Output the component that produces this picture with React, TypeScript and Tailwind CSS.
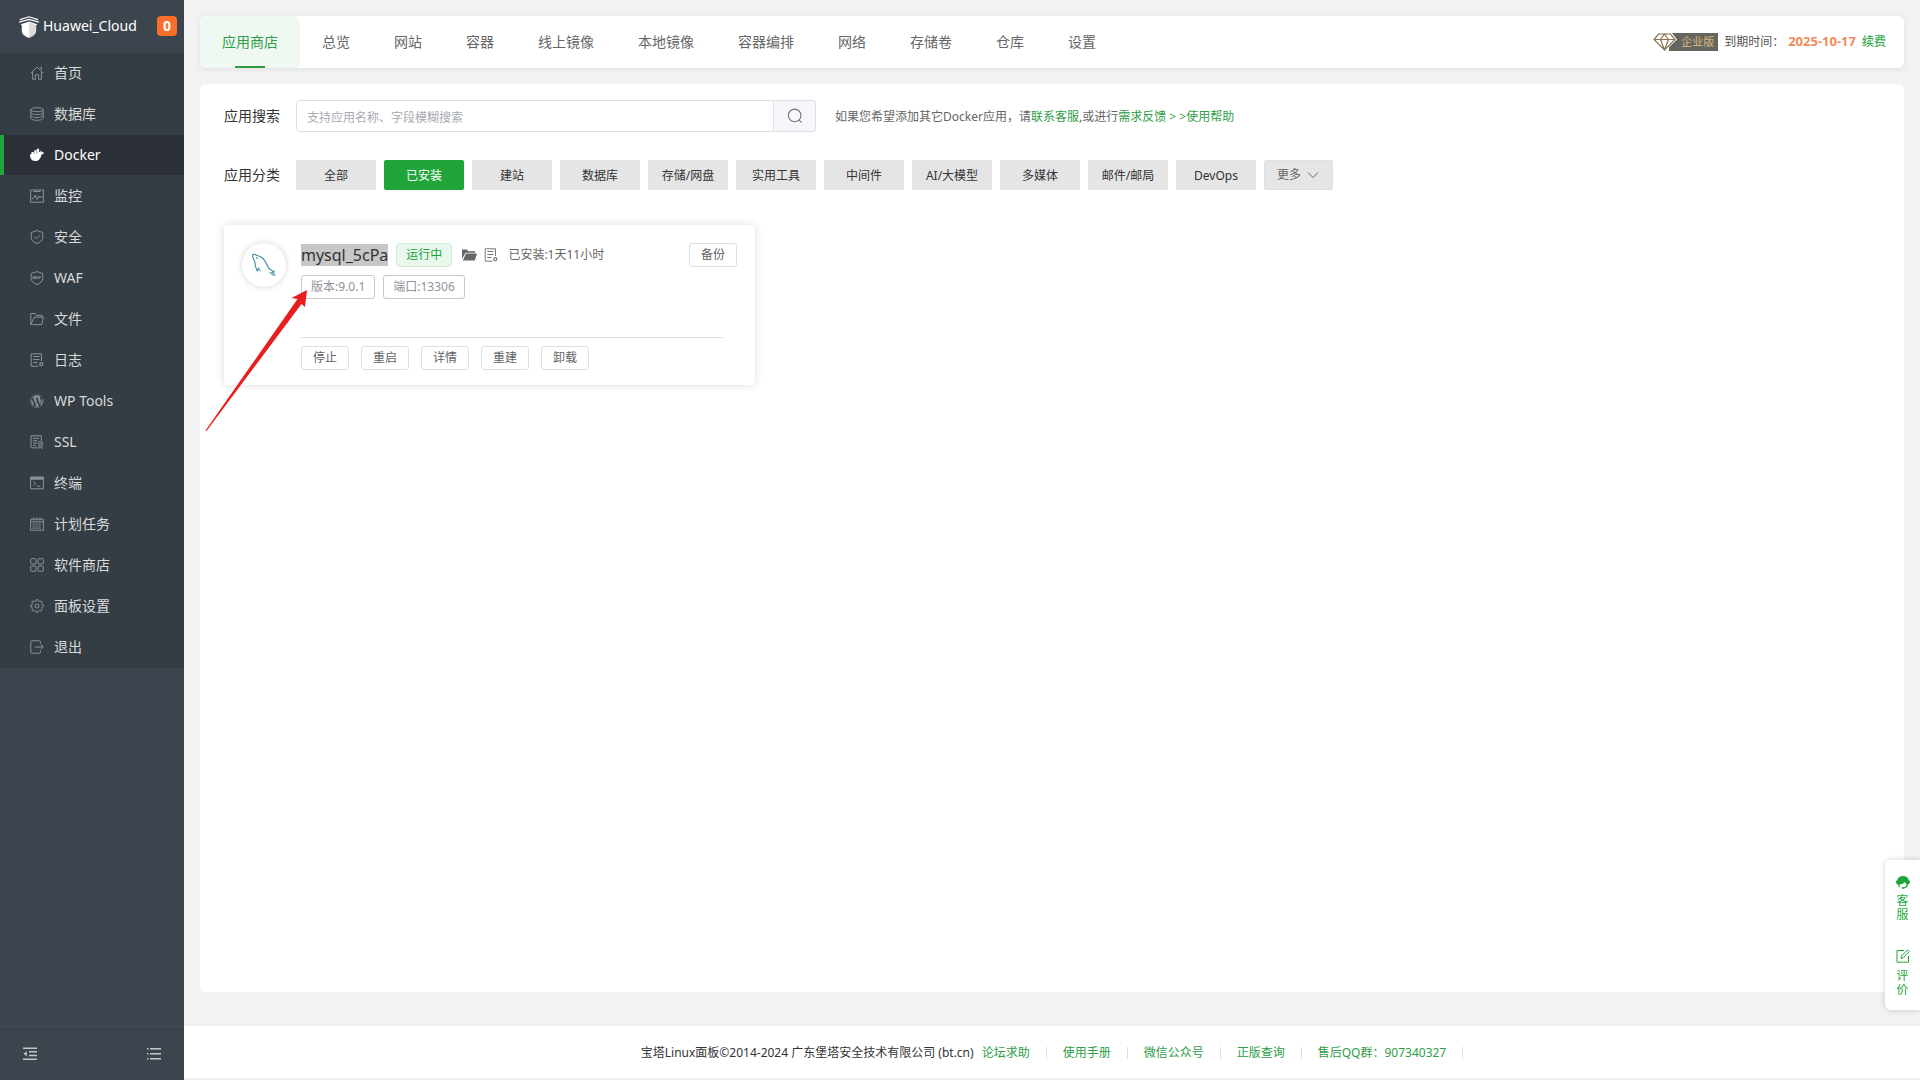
import React from "react";
import { FaWordpress } from "react-icons/fa";

type IconProps = { children: React.ReactNode; className?: string };

function Icon({ children, className = "size-3.5" }: IconProps) {
  return (
    <svg viewBox="0 0 14 14" className={className} fill="none" stroke="currentColor" strokeWidth="1" aria-hidden="true">
      {children}
    </svg>
  );
}

function LogIcon({ className }: { className?: string }) {
  return (
    <Icon className={className}>
      <path d="M11.5 8V.8H1.2v12.4H8.500M3.300 3.500h6.200M3.300 6.500h6.200M3.300 9.500h4" />
      <circle cx="11.3" cy="11.2" r="1.5" strokeWidth="1.300" />
    </Icon>
  );
}

const menu: { label: string; icon: React.ReactNode }[] = [
  { label: "首页", icon: <Icon><path d="M.7 7.2 7 .9l6.3 6.3M2.6 6v7.3h2.8V8.8h3.2v4.5h2.8V6M9.6 1.3h1.8v2.6" /></Icon> },
  { label: "数据库", icon: <Icon><ellipse cx="7" cy="2.7" rx="6.2" ry="2" /><path d="M.8 2.7v8.6c0 1.1 2.8 2 6.2 2s6.2-.9 6.2-2V2.7M.8 5.6c0 1.1 2.8 2 6.2 2s6.2-.9 6.2-2M.8 8.5c0 1.1 2.8 2 6.2 2s6.2-.9 6.2-2" /></Icon> },
  { label: "Docker", icon: <Icon><path fill="currentColor" stroke="none" d="M0 6.300h1.400V4h2.800V2.300h2.600V.8h2.300V4h1.300c0-.7.100-1 .5-1.400.6.5.9 1 .9 1.700.6-.1 1.500 0 2.200.5-.4 1-1.300 1.500-2.500 1.600C10.600 11 8.500 13 5 13 1.600 13 0 10.300 0 6.300Z" /><path d="M4.200 4v1.800M6.800 2.500v3.300" stroke="#2c3138" strokeWidth=".5" /></Icon> },
  { label: "监控", icon: <Icon><path d="M.6 1h12.800v12.200H.6zM3.500 2.500h7M1.500 9.700h2L5.200 6l2 4.500L8.800 7l1.400 2 1-1.500h1.500" /></Icon> },
  { label: "安全", icon: <Icon><path d="M7 .6 12.800 2.500v5c0 2.800-2.500 4.700-5.800 6-3.300-1.300-5.800-3.200-5.800-6v-5zM4.300 6.700l2.100 2.100L10 5.200" /></Icon> },
  { label: "WAF", icon: <Icon><path d="M7 .6 12.800 2.500v5c0 2.800-2.500 4.700-5.800 6-3.300-1.300-5.800-3.200-5.800-6v-5z" /><path strokeWidth=".8" d="m2.600 5.300.8 2.600.8-2.400.8 2.400.7-2.600M6 8l1-2.600L8 8M6.500 7.200h1M9 8V5.500h2M9 6.700h1.600" /></Icon> },
  { label: "文件", icon: <Icon><path d="M.8 12.600V1.500h4.400l1.300 1.900h5.600v1.800M.8 12.600h11l1.500-7.400H4.200v0L.8 12.600" /></Icon> },
  { label: "日志", icon: <LogIcon /> },
  { label: "WP Tools", icon: <FaWordpress className="size-3.5" aria-hidden="true" /> },
  { label: "SSL", icon: <Icon><path d="M11.300 5.500V.8H1v12h6.500M3 3.300h6.300M3 5.700h4.500M3 8h4M3 10.300h3" /><circle cx="10.500" cy="8.500" r="2.200" /><circle cx="10.500" cy="8.500" r=".6" /><path d="m9.300 10.400-.6 3 1.800-1 1.800 1-.6-3" /></Icon> },
  { label: "终端", icon: <Icon><path d="M.6 1.200h12.800v11.600H.6z" /><path fill="currentColor" d="M.6 1.200h12.800v2H.6z" /><path d="m3.500 5.600 2.200 1.800-2.200 1.900M7 10.200h3.500" /></Icon> },
  { label: "计划任务", icon: <Icon><path d="M.6 2.200h12.800v11H.6zM.6 4.800h12.800M4 .4v3M7 .4v3M10 .4v3" /><path strokeWidth="1.200" strokeDasharray="2 1" d="M2.600 7h9M2.600 9h9M2.600 11.100h9" /></Icon> },
  { label: "软件商店", icon: <Icon><rect x=".7" y=".7" width="5.300" height="5.300" rx=".8" /><rect x="8" y=".7" width="5.300" height="5.300" rx=".8" /><rect x=".7" y="8" width="5.300" height="5.300" rx=".8" /><rect x="8" y="8" width="5.300" height="5.300" rx=".8" /></Icon> },
  { label: "面板设置", icon: <Icon><path d="m5.700 2 .4-1.300h1.800L8.300 2l1.400.5 1.200-.7 1.300 1.300-.7 1.200.5 1.400 1.300.4v1.800l-1.300.4-.5 1.400.7 1.200-1.300 1.300-1.200-.7-1.400.5-.4 1.300H6.100L5.700 12l-1.400-.5-1.200.7-1.300-1.300.7-1.200L2 8.300.7 7.900V6.100L2 5.700l.5-1.400-.7-1.200 1.300-1.300 1.200.7z" /><circle cx="7" cy="7" r="2" /></Icon> },
  { label: "退出", icon: <Icon><path d="M10.500 3.500V2c0-.7-.4-1.200-1.200-1.200H2C1.300.8.8 1.300.8 2v10c0 .8.500 1.200 1.200 1.200h7.300c.8 0 1.200-.4 1.200-1.200v-1.500M5 7h8M10.800 4.700 13.200 7l-2.400 2.300" /></Icon> },
];

const tabs = ["应用商店", "总览", "网站", "容器", "线上镜像", "本地镜像", "容器编排", "网络", "存储卷", "仓库", "设置"];
const categories = ["全部", "已安装", "建站", "数据库", "存储/网盘", "实用工具", "中间件", "AI/大模型", "多媒体", "邮件/邮局", "DevOps"];
const actions = ["停止", "重启", "详情", "重建", "卸载"];
const footerLinks = ["论坛求助", "使用手册", "微信公众号", "正版查询", "售后QQ群：907340327"];

function Sidebar() {
  return (
    <aside className="flex w-46 shrink-0 flex-col bg-[#3c444d]">
      <div className="flex h-[53px] items-center pr-[7px] pl-[19px] text-white">
        <svg viewBox="0 0 20 22" className="mr-1 h-[22px] w-5 shrink-0" aria-hidden="true">
          <path d="M10 0v22c-4.500-1.800-7.200-4-7.200-7.500V8.500L10 6.500z" fill="#fff" />
          <path d="M10 6.500l7.200 2v6c0 3.500-2.700 5.700-7.200 7.500z" fill="#dcdcdc" />
          <path d="M0 4.500 10 1l10 3.500M.5 7.500 10 4l9.500 3.500" stroke="#3c444d" strokeWidth="3" fill="none" />
          <path d="M1 3.600 10 .8l9 2.800M0 6.200l10-2.800 10 2.800M2 8.800l8-2.700 8 2.700" stroke="#fff" strokeWidth="1.200" fill="none" />
        </svg>
        <span className="pb-px text-sm">Huawei_Cloud</span>
        <span className="mb-0.5 ml-auto flex size-5 items-center justify-center rounded-sm bg-[#f96f2a] text-sm font-bold">0</span>
      </div>
      <nav className="bg-[#353d44]">
        <ul>
          {menu.map(({ label, icon }) => {
            const active = label === "Docker";
            return (
              <li key={label} className="pb-px">
                <a
                  href="#"
                  aria-current={active ? "page" : undefined}
                  className={
                    active
                      ? "flex h-10 items-center gap-2.5 border-l-4 border-[#20a53a] bg-[#2c3138] pl-[26px] text-sm text-white"
                      : "flex h-10 items-center gap-2.5 border-l-4 border-transparent pl-[26px] text-sm text-[#d8dadb]"
                  }
                >
                  <span className={active ? "text-white" : "text-[#8d9193]"}>{icon}</span>
                  {label}
                </a>
              </li>
            );
          })}
        </ul>
      </nav>
      <div className="mt-auto flex h-[54px] items-center justify-between border-t border-[#454d56] px-[23px] text-[#c4c7ca]">
        <button type="button" aria-label="收起菜单">
          <Icon><path strokeWidth="1.500" d="M0 1.200h14M6 4.800h8M6 8.600h8M0 12.300h14" /><path d="M3.800 4.200v5L.5 6.700z" fill="currentColor" stroke="none" /></Icon>
        </button>
        <button type="button" aria-label="菜单列表">
          <Icon><path strokeWidth="1.500" d="M0 1.700h1.500M3 1.700h11M0 6.700h1.500M3 6.700h11M0 11.700h1.500M3 11.700h11" /></Icon>
        </button>
      </div>
    </aside>
  );
}

function TopBar() {
  return (
    <header className="flex h-13 items-center justify-between rounded-md bg-white pr-[18px] shadow-[0_1px_6px_rgba(0,0,0,0.08)]">
      <nav className="flex h-full">
        {tabs.map((tab, i) => (
          <a
            key={tab}
            href="#"
            className={
              i === 0
                ? "relative flex items-center rounded-md bg-[#f0f8f2] px-[22px] text-sm text-[#2f9d48] after:absolute after:bottom-0 after:left-1/2 after:h-0.5 after:w-[30px] after:-translate-x-1/2 after:bg-[#2f9d48]"
                : "flex items-center px-[22px] text-sm text-[#666]"
            }
          >
            {tab}
          </a>
        ))}
      </nav>
      <div className="flex items-center text-xs text-[#555]">
        <svg viewBox="0 0 24 18" className="z-10 -mr-2 h-[18px] w-6" aria-hidden="true">
          <path d="M5 0h14l5 6.500L12 18 0 6.500z" fill="#fff" />
          <path d="M5.500 1h12L22 6.500 11.500 17 1 6.500zM1 6.500h21M7.500 6.500l4 10.500 4-10.500M7.500 6.500l4-5.500 4 5.500" fill="none" stroke="#8a7350" strokeWidth="1.200" />
        </svg>
        <span className="mr-1.5 flex h-[18px] items-center bg-[#666661] pr-1 pl-3 text-[11px] text-[#d8b878]">企业版</span>
        <span className="mr-1">到期时间：</span>
        <span className="mr-1.5 text-[13px] font-bold text-[#f18a5c]">2025-10-17</span>
        <a href="#" className="font-medium text-[#3dab55]">续费</a>
      </div>
    </header>
  );
}

function AppCard() {
  return (
    <article className="relative mt-[35px] flex w-[531px] gap-[15px] rounded-sm bg-white px-[18px] pt-[18px] pb-[15px] shadow-[0_0_8px_rgba(0,0,0,0.14)]">
      <div className="flex size-11 shrink-0 items-center justify-center rounded-full bg-white shadow-[0_0_6px_rgba(0,0,0,0.18)]">
        <svg viewBox="0 0 24 24" className="size-6" fill="none" stroke="#3f8ba3" strokeWidth="1.100" strokeLinecap="round" strokeLinejoin="round" role="img" aria-label="MySQL">
          <path d="M2.500 8C1.500 6 .2 3.800.7 2c.3-1 1.800-1 3-.2C5 2.800 7 2.600 9 4c3.500 2.300 5 5.200 6.300 8.500 1 2.500 2.200 3.700 3.700 4.500 1.200.6 2.400 1 3.500 1.900-1 .2-2 .1-2.600.5 1.200.8 2.300 1.800 3.100 3.100M2.500 8c.6 2 .7 3 .9 4.500.2 1.800.9 3.500 1.800 5.500.8-.6.7-2 1.100-3 .5 1 1.100 2 2 2.600M18 19.500c.9 1.200 2 1.800 3 2.500" />
          <path d="M4.500 4.500l.6 1" />
        </svg>
      </div>
      <div className="min-w-0 flex-1">
        <div className="flex h-6 items-center">
          <h2 className="bg-[#c7c7c7] text-base leading-[22px] text-[#333]">mysql_5cPa</h2>
          <span className="ml-2 rounded-sm border border-[#cdeed5] bg-[#e8f8ec] px-[9px] text-xs leading-[22px] text-[#20a53a]">运行中</span>
          <button type="button" aria-label="打开目录" className="ml-2.5 text-[#666]">
            <svg viewBox="0 0 15 14" className="h-3.5 w-[15px]" fill="currentColor" aria-hidden="true">
              <path d="M0 11V1.500h5l1.300 1.700H13v1.600H3.500zM4 5.600h11L12.800 12.500H.8z" />
            </svg>
          </button>
          <button type="button" aria-label="日志" className="ml-[7px] text-[#777]">
            <LogIcon />
          </button>
          <span className="ml-2.5 text-xs text-[#666]">已安装:1天11小时</span>
          <button type="button" className="ml-auto h-6 w-12 rounded-[3px] border border-[#dcdfe6] text-xs text-[#606266]">备份</button>
        </div>
        <div className="mt-2 flex gap-2 text-xs leading-[22px] text-[#909399]">
          <span className="rounded-[3px] border border-[#c8c9cc] px-[9px]">版本:9.0.1</span>
          <span className="rounded-[3px] border border-[#c8c9cc] px-[9px]">端口:13306</span>
        </div>
        <div className="mt-[38px] mr-3.5 flex gap-3 border-t border-[#dcdfe6] pt-2">
          {actions.map((a) => (
            <button key={a} type="button" className="h-6 w-12 rounded-[3px] border border-[#dcdfe6] text-xs text-[#606266]">{a}</button>
          ))}
        </div>
      </div>
      <svg viewBox="0 0 102 142" className="pointer-events-none absolute top-[65px] -left-[19px] h-[142px] w-[102px]" aria-hidden="true">
        <path d="M102 0 86.500 8l6 1L.5 140.500l.8.800L96.500 14l3.500 3z" fill="#e81e1e" />
      </svg>
    </article>
  );
}

function StorePanel() {
  return (
    <main className="flex-1 rounded-md bg-white px-6 py-4">
      <div className="flex items-center text-xs">
        <label htmlFor="search" className="w-18 text-sm text-[#333]">应用搜索</label>
        <input
          id="search"
          type="text"
          placeholder="支持应用名称、字段模糊搜索"
          className="h-8 w-[478px] rounded-l border border-[#dcdfe6] px-2.5 pt-0.5 text-xs outline-none placeholder:text-[#a8abb2]"
        />
        <button type="button" aria-label="搜索" className="flex h-8 w-[42px] items-center justify-center rounded-r border border-l-0 border-[#dcdfe6] bg-[#f5f7fa] text-[#777]">
          <Icon className="size-4"><circle cx="6.700" cy="6.500" r="5.500" /><path d="m10.600 10.600 2.200 2.200" /></Icon>
        </button>
        <p className="ml-[19px] pt-0.5 text-[#666]">
          如果您希望添加其它Docker应用，请<a href="#" className="text-[#2f9d48]">联系客服</a>,或进行<a href="#" className="text-[#2f9d48]">需求反馈</a>{" "}
          <a href="#" className="text-[#2f9d48]">&gt; &gt;使用帮助</a>
        </p>
      </div>
      <div className="mt-7 flex items-center">
        <span className="w-18 text-sm text-[#333]">应用分类</span>
        <div className="flex gap-2 text-xs">
          {categories.map((c) => (
            <button
              key={c}
              type="button"
              className={c === "已安装" ? "h-[30px] w-20 rounded-xs bg-[#20a53a] pt-0.5 text-white" : "h-[30px] w-20 rounded-xs bg-[#e5e5e5] pt-0.5 text-[#333]"}
            >
              {c}
            </button>
          ))}
          <button type="button" className="flex h-[30px] items-center gap-[5px] rounded-xs border border-[#dcdfe6] bg-[#e5e5e5] px-3 text-[#666]">
            更多
            <Icon className="size-3.5"><path d="m2 4.500 5 5 5-5" /></Icon>
          </button>
        </div>
      </div>
      <AppCard />
    </main>
  );
}

function FloatingTools() {
  return (
    <div className="fixed right-0 bottom-[70px] flex h-[150px] w-[35px] flex-col items-center gap-[27px] rounded-l-md bg-white pt-4 text-xs leading-[14px] text-[#20a53a] shadow-[0_0_6px_rgba(0,0,0,0.18)]">
      <a href="#" className="flex w-3 flex-col items-center gap-[5px]">
        <svg viewBox="0 0 14 13" className="h-[13px] w-3.5" fill="currentColor" aria-hidden="true">
          <path d="M7 0C3.700 0 1.500 2 1.200 4.300.4 4.600 0 5.300 0 6.200c0 1.100.6 1.700 1.500 1.800C2 9.800 3.200 11.300 4.800 12c-1-1.200-1.300-2.300-1.300-3.500C5.800 8.300 7.800 7.500 8.900 6c.5 1.100 1.100 1.700 2 2.200-.5 1.600-1.600 2.700-3.200 3-.3-.5-1.900-.4-1.900.6 0 1.200 1.700 1.400 2.200.6 2.200-.3 3.800-2 4.400-4.400C13.400 7.900 14 7.200 14 6.200c0-.9-.4-1.600-1.200-1.900C12.500 2 10.300 0 7 0Z" />
        </svg>
        客服
      </a>
      <a href="#" className="flex w-3 flex-col items-center gap-1.5">
        <Icon><path d="M8 1.500H1v11.700h11.500V7M5 9.500l.5-2.500L11.500.9l1.700 1.700-6 6.200z" /></Icon>
        评价
      </a>
    </div>
  );
}

export default function App() {
  return (
    <div className="flex min-h-screen bg-[#f2f2f2] font-['Noto_Sans','Noto_Sans_CJK_SC',sans-serif]">
      <Sidebar />
      <div className="flex min-w-0 flex-1 flex-col">
        <div className="flex flex-1 flex-col gap-4 px-4 pt-4 pb-[34px]">
          <TopBar />
          <StorePanel />
        </div>
        <footer className="mb-0.5 flex h-13 items-center justify-center bg-white pt-0.5 text-xs text-[#333]">
          <span>宝塔Linux面板©2014-2024 广东堡塔安全技术有限公司 (bt.cn)</span>
          {footerLinks.map((l, i) => (
            <a key={l} href="#" className={i === 0 ? "ml-2 border-r border-[#ddd] pr-4 leading-3 text-[#2f9d48]" : "border-r border-[#ddd] px-4 leading-3 text-[#2f9d48]"}>
              {l}
            </a>
          ))}
        </footer>
      </div>
      <FloatingTools />
    </div>
  );
}
